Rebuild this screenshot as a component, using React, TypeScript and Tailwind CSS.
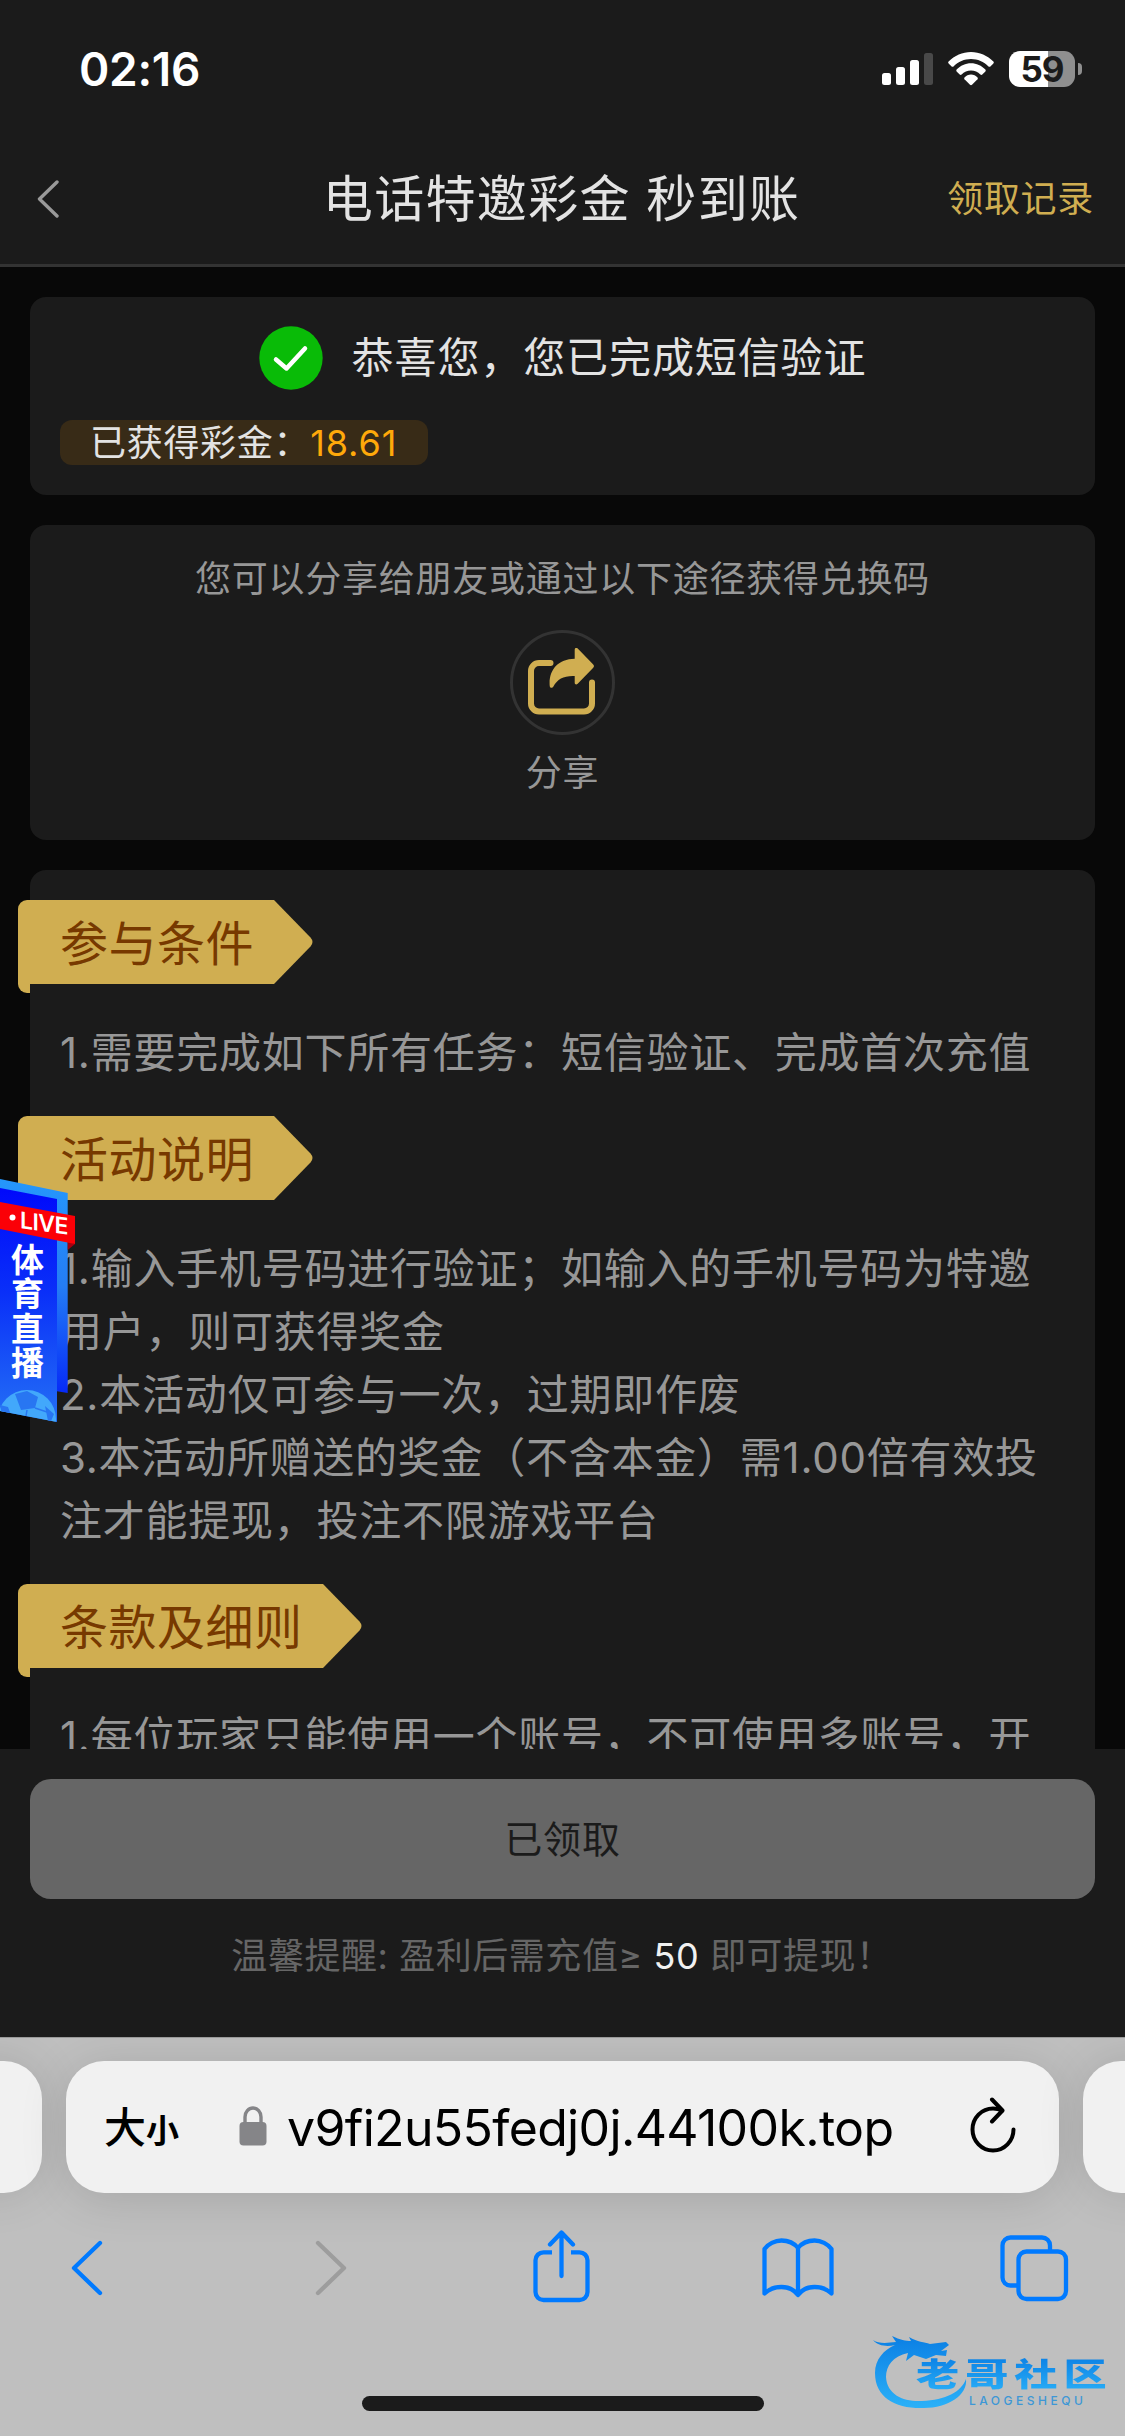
import type { ReactNode } from 'react';

function StatusBar() {
  return (
    <div className="flex h-[138px] shrink-0 items-start justify-between pr-[43px] pl-[79px]">
      <div className="mt-[37px] text-[46px] leading-[64px] font-semibold tracking-[-0.3px] text-white">02:16</div>
      <div className="mt-[51px] flex items-start">
        <svg width="51" height="34" viewBox="0 0 51 34" fill="#fff">
          <rect x="0" y="22" width="9" height="12" rx="2.5" />
          <rect x="14" y="16" width="9" height="18" rx="2.5" />
          <rect x="28" y="9" width="9" height="25" rx="2.5" />
          <rect x="42" y="2" width="9" height="32" rx="2.5" fill="#494949" />
        </svg>
        <svg className="ml-[15px]" width="46" height="35" viewBox="0 0 46 35" fill="#fff">
          <path d="M0.6 10.6C6.500 4.500 14.500 1 23 1s16.500 3.500 22.400 9.600c.6.600.6 1.200 0 1.800l-3 3c-.6.600-1.300.6-1.900 0C35.900 10.700 29.600 8 23 8S10.100 10.700 5.500 15.400c-.6.600-1.300.6-1.900 0l-3-3c-.6-.6-.6-1.200 0-1.800z" />
          <path d="M8.600 18.600C12.400 14.600 17.500 12.300 23 12.300s10.600 2.300 14.400 6.300c.5.600.5 1.200 0 1.800l-3.100 3.100c-.6.600-1.300.6-1.900 0-2.500-2.600-5.800-4.100-9.400-4.100s-6.900 1.500-9.400 4.100c-.6.600-1.300.6-1.900 0l-3.100-3.100c-.5-.6-.5-1.200 0-1.800z" />
          <path d="M16.500 26.500C18.200 24.600 20.500 23.500 23 23.500s4.800 1.100 6.500 3c.5.600.5 1.200 0 1.700l-5.500 5.500c-.6.600-1.400.6-2 0l-5.500-5.500c-.5-.5-.5-1.100 0-1.700z" />
        </svg>
        <div className="ml-[15px] flex h-[36px] w-[66px] items-center justify-center rounded-[11px] bg-[linear-gradient(to_right,#fff_59%,#8f8f8f_59%)] text-[35px] leading-[36px] font-bold tracking-[-1px] text-[#1b1b1b]">
          59
        </div>
        <div className="mt-[12px] ml-[3px] h-[12px] w-[4px] rounded-r-full bg-[#8f8f8f]" />
      </div>
    </div>
  );
}

function Header() {
  return (
    <div className="flex h-[129px] shrink-0 items-center justify-between border-b-[3px] border-[#333] pr-[31px] pb-[4px] pl-[37px]">
      <svg width="160" height="38" viewBox="0 0 160 38" fill="none" stroke="#999" strokeWidth="3.400" strokeLinecap="round" strokeLinejoin="round">
        <path d="M20 2L2.500 19L20 36" />
      </svg>
      <div className="mr-[21px] text-[50px] tracking-[1.35px] whitespace-nowrap text-[#e3e3e3]">电话特邀彩金 秒到账</div>
      <div className="text-[36px] tracking-[0.7px] text-[#d0ae51]">领取记录</div>
    </div>
  );
}

function ShareIcon() {
  return (
    <svg width="70" height="70" viewBox="0 0 70 70" fill="none">
      <path
        d="M22.500 15H11a8 8 0 0 0-8 8v32.500a8 8 0 0 0 8 8h45a8 8 0 0 0 8-8V34.500"
        stroke="#d0ae51"
        strokeWidth="6"
        strokeLinecap="round"
      />
      <path
        d="M46.700 1.700c0-1.800 1.600-2.600 3-1.200L65 16.300c1.300 1.200 1.300 2.300 0 3.600L49.700 35.700c-1.400 1.400-3 .6-3-1V28C36 27.500 29.500 31 25.400 38.400c-1.400 2.200-3.500 1.800-3.700-.6C20.500 22.500 29.500 11 46.700 10.700z"
        fill="#d0ae51"
      />
    </svg>
  );
}

function Tag({ children }: { children: string }) {
  return (
    <div className="-ml-[12px] flex w-max flex-col items-start">
      <div className="flex h-[84px]">
        <div className="flex items-center rounded-tl-[9px] bg-[#d0ae51] pt-[3px] pr-[20px] pl-[42px] text-[48px] tracking-[0.5px] whitespace-nowrap text-[#773900]">
          {children}
        </div>
        <svg width="40" height="84" viewBox="0 0 40 84" fill="#d0ae51">
          <path d="M0 0L36.500 37.500Q40.500 42 36.500 46.500L0 84z" />
        </svg>
      </div>
      <div className="h-[9px] w-[12px] rounded-bl-[9px] bg-[#d0ae51]" />
    </div>
  );
}

function Lines({ lines }: { lines: string[] }) {
  return (
    <div className="mt-[28px] mb-[32px] ml-[30px] text-[42px] leading-[63px] tracking-[0.75px] text-[#979797]">
      {lines.map((line) => (
        <p key={line} className="whitespace-nowrap">
          {line}
        </p>
      ))}
    </div>
  );
}

function LiveBadge() {
  return (
    <div className="absolute top-[1179px] left-0 h-[244px] w-[76px]">
      <svg className="absolute inset-0" width="76" height="244" viewBox="0 0 76 244">
        <defs>
          <linearGradient id="back" x1="0" y1="0" x2="0" y2="1">
            <stop offset="0" stopColor="#2597fb" />
            <stop offset=".5" stopColor="#247df5" />
            <stop offset="1" stopColor="#062af8" />
          </linearGradient>
          <linearGradient id="front" x1="0" y1="0" x2="0" y2="1">
            <stop offset="0" stopColor="#0009fb" />
            <stop offset=".45" stopColor="#0a30f8" />
            <stop offset="1" stopColor="#2470f5" />
          </linearGradient>
          <clipPath id="face">
            <path d="M0 9L57 20V243L0 232z" />
          </clipPath>
        </defs>
        <path d="M0 0L67.700 14V214L0 203z" fill="url(#back)" />
        <path d="M0 9L57 20V243L0 232z" fill="url(#front)" />
        <g clipPath="url(#face)">
          <circle cx="27" cy="240" r="29" fill="#42a8fb" />
          <path d="M15 215l12-3 11 6-3 11-14 2zM0 226l8 2 4 11-8 6M45 227l9 8-5 12" fill="#2876f2" />
          <path d="M27 231l-2 12M35 229l12 4" stroke="#2876f2" strokeWidth="1.500" />
        </g>
        <path d="M67.700 62L75 65L67.700 71z" fill="#a80010" />
        <path d="M0 23L75 37V65L0 50z" fill="#fb0007" />
        <circle cx="12.500" cy="38.500" r="3" fill="#fff" />
      </svg>
      <span className="absolute top-[27px] left-[20px] origin-left skew-y-[8deg] text-[23px] leading-[28px] font-semibold tracking-[-0.5px] text-white">LIVE</span>
      <span className="absolute top-[64px] left-[11px] w-[34px] text-[33px] leading-[34.300px] font-bold text-white">体育直播</span>
    </div>
  );
}

function BottomAction() {
  return (
    <div className="relative flex h-[288px] shrink-0 flex-col items-center bg-[#1b1b1b] px-[30px] pt-[30px]">
      <button className="h-[120px] w-full rounded-[21px] bg-[#666] text-[38px] tracking-[0.9px] text-[#1b1b1b]">已领取</button>
      <p className="mt-[30px] mr-[1px] text-[36px] leading-[54px] tracking-[0.55px] whitespace-nowrap text-[#666]">
        温馨提醒: 盈利后需充值≥ <span className="text-[#f1f1f1]">50</span> 即可提现！
      </p>
    </div>
  );
}

function ToolIcon({ w, h, className, children }: { w: number; h: number; className: string; children: ReactNode }) {
  return (
    <svg className={className} width={w} height={h} viewBox={`0 0 ${w} ${h}`} fill="none" stroke="#007aff" strokeWidth="4.300" strokeLinecap="round" strokeLinejoin="round">
      {children}
    </svg>
  );
}

function Safari() {
  return (
    <div className="relative flex h-[399px] shrink-0 flex-col overflow-hidden border-t border-[#999] bg-[#bfbfbf]">
      <div className="mt-[23px] -ml-[60px] flex w-[1245px] shrink-0 gap-[24px]">
        <div className="h-[132px] w-[102px] shrink-0 rounded-[38px] bg-[#f1f1f1] shadow-[0_0_48px_rgba(0,0,0,0.12)]" />
        <div className="flex h-[132px] w-[993px] shrink-0 items-center rounded-[38px] bg-[#f1f1f1] shadow-[0_6px_48px_rgba(0,0,0,0.13)]">
          <div className="ml-[38px] flex w-[76px] items-baseline whitespace-nowrap text-black">
            <span className="text-[42px] font-medium">大</span>
            <span className="text-[33px] font-bold">小</span>
          </div>
          <svg className="-mt-[3px] ml-[59px]" width="28" height="40" viewBox="0 0 28 40">
            <path d="M6 19V11a8 9 0 0 1 16 0v8" fill="none" stroke="#858588" strokeWidth="3.400" />
            <rect x="0.500" y="16" width="27" height="23.500" rx="4" fill="#858588" />
          </svg>
          <div className="ml-[20px] w-[640px] pt-[2px] text-[50px] tracking-[-0.66px] whitespace-nowrap text-black">v9fi2u55fedj0j.44100k.top</div>
          <svg className="-mt-[5px] ml-[43px] shrink-0" width="46" height="56" viewBox="0 0 46 56" fill="none" stroke="#000" strokeWidth="4" strokeLinecap="round" strokeLinejoin="round">
            <path d="M32 13.500C29 12 26 11.500 23 11.500a20.500 21 0 1 0 20.500 21" />
            <path d="M22 2.500L32.500 13.500L22 24.500" />
          </svg>
        </div>
        <div className="h-[132px] w-[102px] shrink-0 rounded-[38px] bg-[#f1f1f1] shadow-[0_0_48px_rgba(0,0,0,0.12)]" />
      </div>
      <div className="mt-[36px] flex h-[74px] items-start">
        <ToolIcon w={32} h={56} className="mt-[11px] ml-[71px]">
          <path d="M29 3L3 28L29 53" />
        </ToolIcon>
        <ToolIcon w={32} h={56} className="mt-[11px] ml-[212px]">
          <path d="M3 3L29 28L3 53" stroke="#9d9d9d" />
        </ToolIcon>
        <ToolIcon w={57} h={73} className="mt-[1px] ml-[186px]">
          <path d="M19 22.300H10.500a8 8 0 0 0-8 8V62a8 8 0 0 0 8 8h36a8 8 0 0 0 8-8V30.300a8 8 0 0 0-8-8H38" strokeLinecap="butt" />
          <path d="M28.500 46V3M17 14.500L28.500 2.500L40 14.500" />
        </ToolIcon>
        <ToolIcon w={72} h={61} className="mt-[9px] ml-[172px]">
          <path d="M36 56V10C32 5 26 2.500 19.500 2.500S6 6 2.500 11V55.500C7 51 13 49 19.500 49S32 51.500 36 57C40 51.500 46 49 52.500 49S65 51 69.500 55.500V11C66 6 59 2.500 52.500 2.500S40 5 36 10" />
        </ToolIcon>
        <ToolIcon w={69} h={67} className="mt-[6px] ml-[166px]">
          <path d="M17 50.500H10.500a8 8 0 0 1-8-8V10.500a8 8 0 0 1 8-8H42a8 8 0 0 1 8 8V16" strokeLinecap="butt" />
          <rect x="18.500" y="16.500" width="47.500" height="47.500" rx="8" />
        </ToolIcon>
      </div>
      <div className="mx-auto mt-[93px] h-[15px] w-[402px] shrink-0 rounded-full bg-[#1b1b1b]" />
      <Watermark />
    </div>
  );
}

function Watermark() {
  return (
    <div className="absolute top-[292px] left-[870px] h-[90px] w-[240px]">
      <svg className="absolute inset-0" width="240" height="90" viewBox="0 0 240 90">
        <defs>
          <linearGradient id="wm" x1="0" y1="0" x2="0" y2="1">
            <stop offset="0" stopColor="#0b7fe4" />
            <stop offset="1" stopColor="#2bb1f8" />
          </linearGradient>
        </defs>
        <path
          d="M3 10C9 14 17 13 26 12L22 6C30 10 36 11 41 11L39 7C48 12 54 12 60 14L76 12L79 15L71 21L77 20L76 26L66 25L56 29L44 25L36 31L38 23C23 26 16 36 16 47C17 65 34 72 52 71C76 70 91 62 96 49C98 65 78 78 54 78C26 79 5 68 5 43C5 29 14 20 25 15C17 17 8 16 3 10Z"
          fill="url(#wm)"
        />
      </svg>
      <span className="absolute top-[25px] left-[46px] origin-left scale-x-[1.35] bg-linear-to-b from-[#0b7fe4] to-[#2bb1f8] bg-clip-text text-[32px] leading-[40px] font-black tracking-[4.400px] whitespace-nowrap text-transparent">
        老哥社区
      </span>
      <span className="absolute top-[64px] left-[99px] text-[12px] leading-[13px] font-medium tracking-[3.500px] text-[#3d97d6]">LAOGESHEQU</span>
    </div>
  );
}

export default function App() {
  return (
    <div className="relative flex h-[2436px] w-[1125px] flex-col overflow-hidden bg-[#1b1b1b] font-['Inter','Noto_Sans_CJK_SC',sans-serif]">
      <StatusBar />
      <Header />
      <main className="flex h-[1482px] shrink-0 flex-col gap-[30px] overflow-hidden bg-[#080808] px-[30px] pt-[30px]">
        <section className="flex h-[198px] shrink-0 flex-col rounded-[16px] bg-[#1b1b1b] px-[30px] pt-[29px]">
          <div className="flex items-center justify-center gap-[29px]">
            <svg width="64" height="64" viewBox="0 0 64 64">
              <circle cx="32" cy="32" r="31.700" fill="#09bb07" />
              <path d="M17 33.500L27.500 42.500L46 22.500" fill="none" stroke="#fff" strokeWidth="4.500" strokeLinecap="round" strokeLinejoin="round" />
            </svg>
            <span className="text-[42px] leading-[60px] tracking-[0.9px] text-[#e3e3e3]">恭喜您，您已完成短信验证</span>
          </div>
          <div className="mt-[30px] flex h-[45px] w-[368px] items-center rounded-[12px] bg-[#382b17] pl-[30px] text-[36px] tracking-[0.7px] whitespace-nowrap text-[#e3e3e3]">
            已获得彩金：<span className="tracking-[0.9px] text-[#ffa90a]">18.61</span>
          </div>
        </section>
        <section className="flex h-[315px] shrink-0 flex-col items-center rounded-[16px] bg-[#1b1b1b] pt-[27px] text-[36px] leading-[54px] tracking-[0.75px] text-[#979797]">
          <p>您可以分享给朋友或通过以下途径获得兑换码</p>
          <div className="mt-[24px] flex size-[105px] items-start justify-start rounded-full border-[3px] border-[#333] pt-[15px] pl-[15px]">
            <ShareIcon />
          </div>
          <p className="mt-[11px]">分享</p>
        </section>
        <section className="h-[1000px] shrink-0 rounded-t-[16px] bg-[#1b1b1b] pt-[30px]">
          <Tag>参与条件</Tag>
          <Lines lines={['1.需要完成如下所有任务：短信验证、完成首次充值']} />
          <Tag>活动说明</Tag>
          <Lines
            lines={[
              '1.输入手机号码进行验证；如输入的手机号码为特邀',
              '用户，则可获得奖金',
              '2.本活动仅可参与一次，过期即作废',
              '3.本活动所赠送的奖金（不含本金）需1.00倍有效投',
              '注才能提现，投注不限游戏平台',
            ]}
          />
          <Tag>条款及细则</Tag>
          <Lines lines={['1.每位玩家只能使用一个账号，不可使用多账号，开']} />
        </section>
      </main>
      <BottomAction />
      <Safari />
      <LiveBadge />
    </div>
  );
}
